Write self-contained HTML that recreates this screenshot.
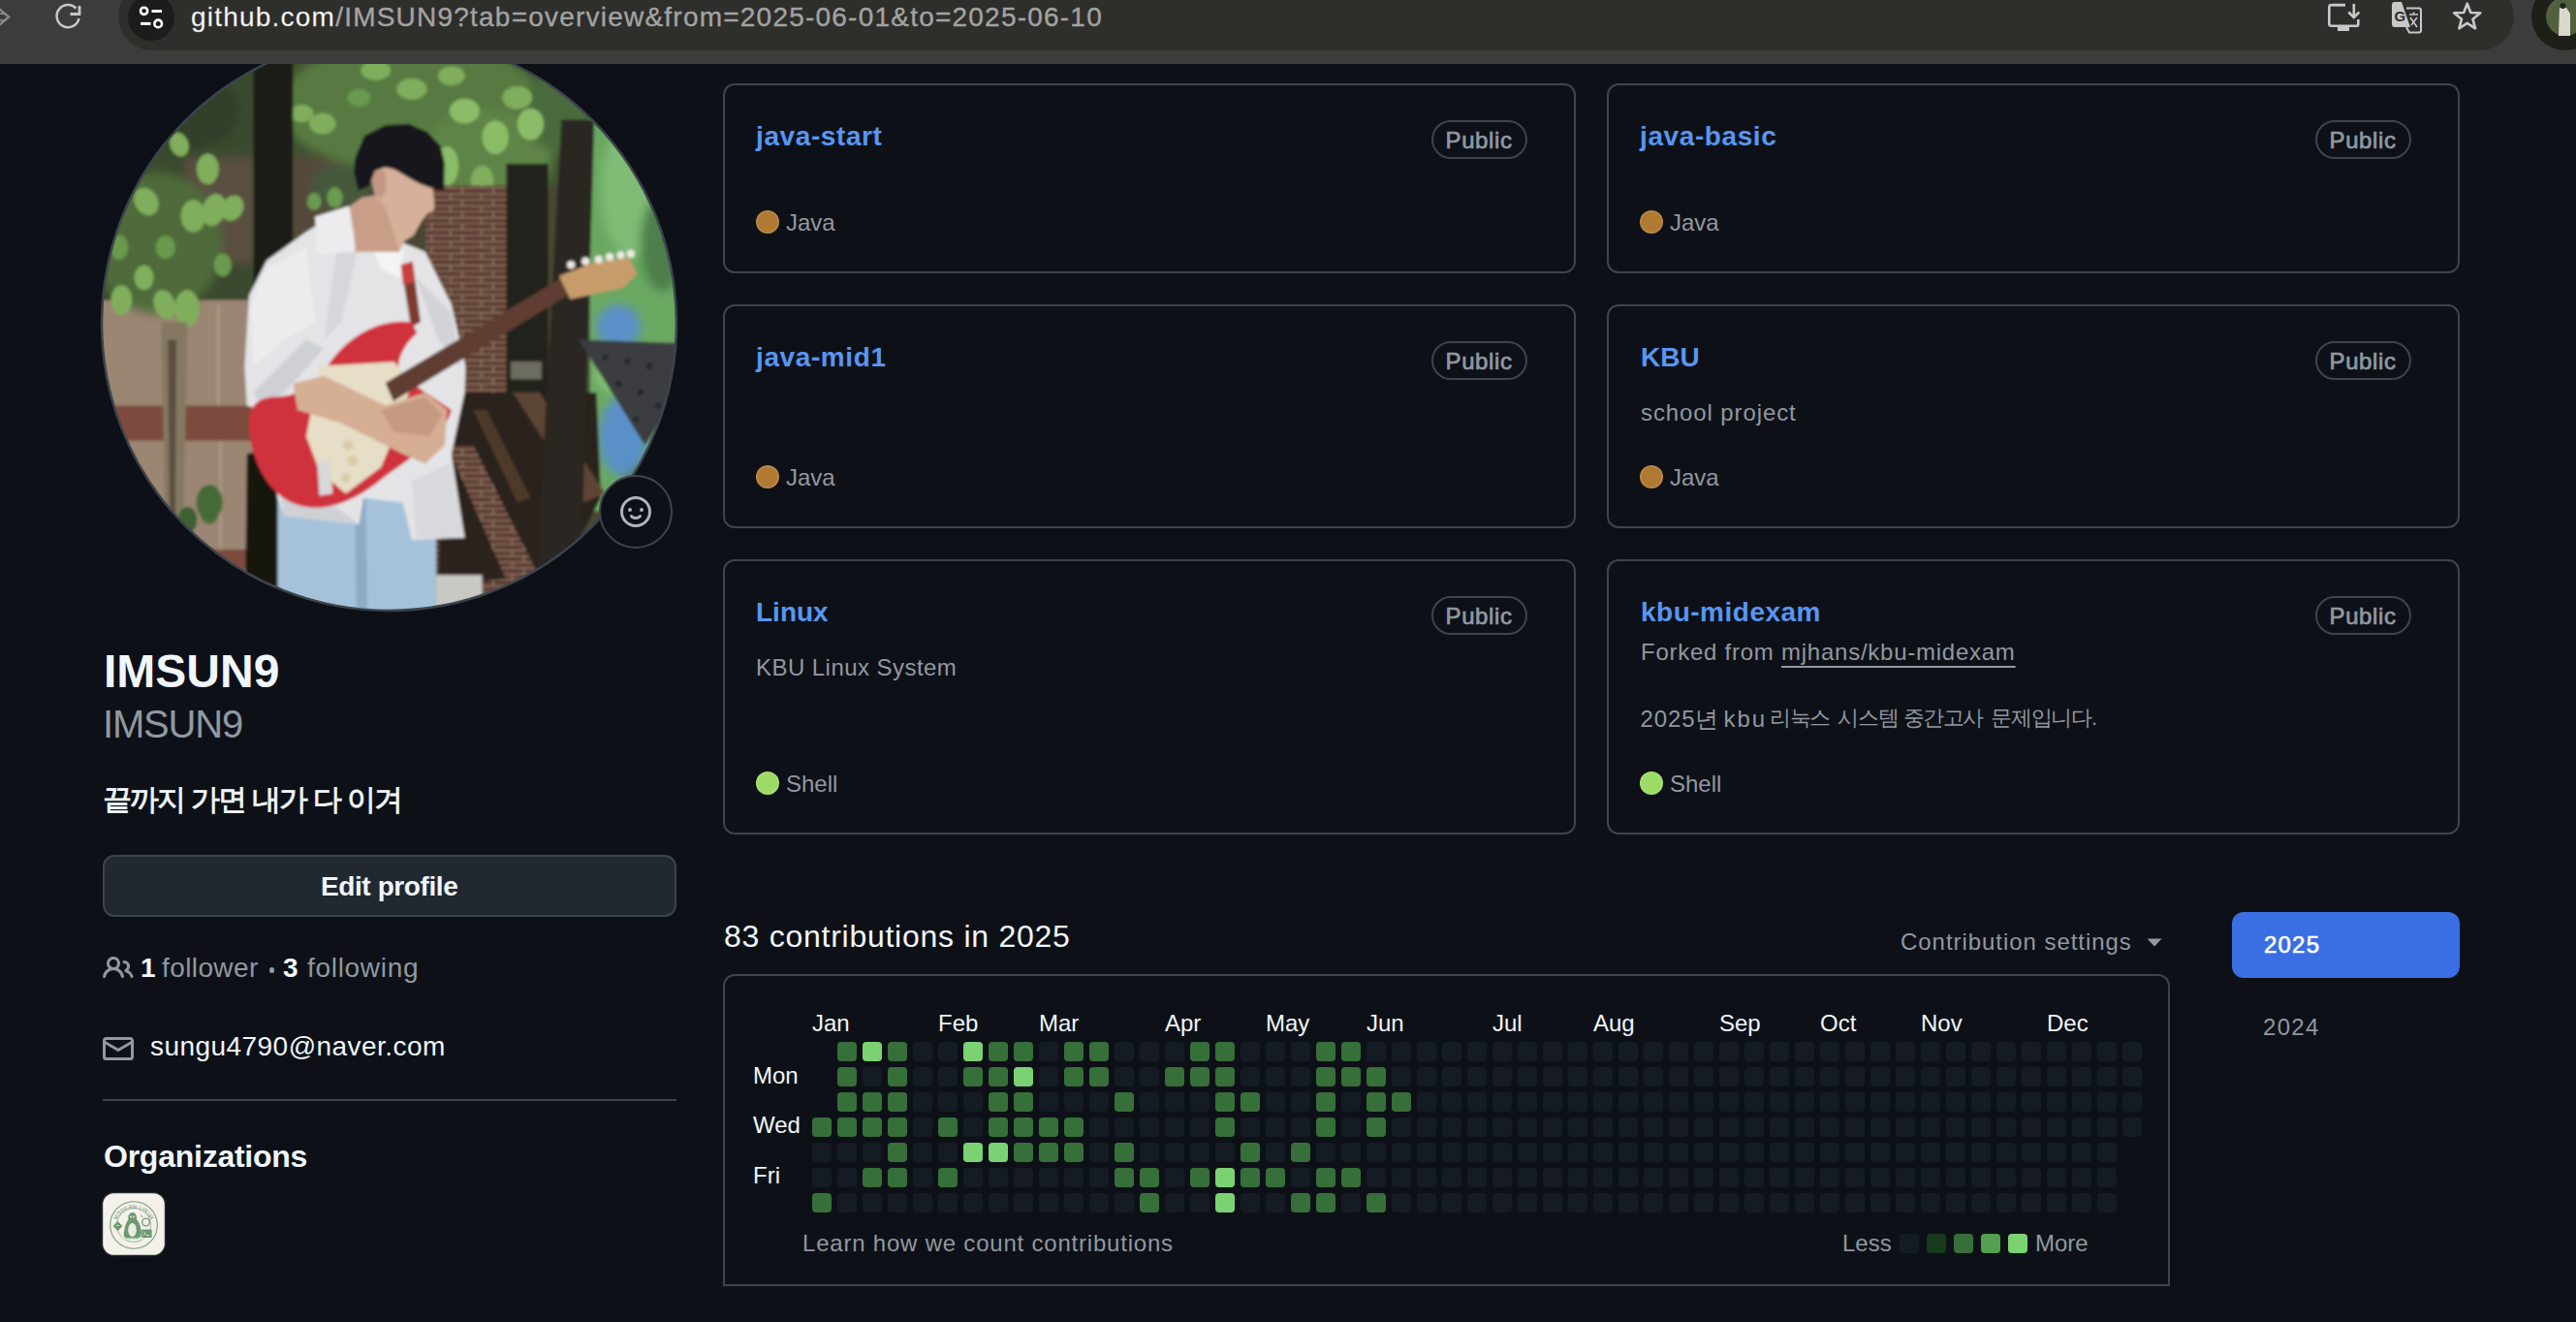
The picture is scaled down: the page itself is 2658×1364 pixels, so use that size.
<!DOCTYPE html>
<html><head><meta charset="utf-8"><title>IMSUN9</title>
<style>
html,body{margin:0;padding:0;}
body{width:2658px;height:1364px;overflow:hidden;background:#0d1117;position:relative;font-family:"Liberation Sans", sans-serif;}
.t{position:absolute;white-space:nowrap;font-family:"Liberation Sans", sans-serif;}
svg{display:block}
</style></head><body>
<svg style="position:absolute;left:0;top:0" width="720" height="650" viewBox="0 0 720 650">
<defs>
<clipPath id="avc"><circle cx="401.5" cy="333.5" r="296"/></clipPath>
<filter id="gbl" x="0" y="0" width="100%" height="100%"><feGaussianBlur stdDeviation="1.6"/></filter>
<filter id="sbl" x="-20%" y="-20%" width="140%" height="140%"><feGaussianBlur stdDeviation="10"/></filter>
<pattern id="brick" width="70" height="27" patternUnits="userSpaceOnUse">
<rect width="70" height="27" fill="#583629"/>
<path d="M0 25.5 H70 M0 12 H70 M35 0 V12 M8 12 V25.5" stroke="#8c7666" stroke-width="4"/>
</pattern>
</defs>
<g clip-path="url(#avc)">
<g filter="url(#gbl)">
<g transform="translate(80 60) scale(0.45384)">
<rect x="-10" y="-10" width="1440" height="1340" fill="#474733"/>
<!-- left beige wall -->
<rect x="0" y="540" width="410" height="800" fill="#9a8672"/>
<rect x="0" y="790" width="410" height="80" fill="#7b4b3d"/>
<rect x="0" y="1117" width="410" height="46" fill="#7b4b3d"/>
<path d="M320 560 V790 M325 870 V1117" stroke="#b4a08c" stroke-width="4"/>
<!-- wall behind top foliage -->
<rect x="480" y="200" width="170" height="140" fill="#6e5c4a"/>
<!-- foliage base -->
<rect x="0" y="-10" width="400" height="560" fill="#3a4a2e"/>
<rect x="490" y="-10" width="700" height="300" fill="#3f5230"/>
<g filter="url(#sbl)"><rect x="244" y="224" width="160" height="243" fill="#5a5040"/>
<rect x="478" y="224" width="150" height="200" fill="#54483a"/></g>
<g filter="url(#sbl)">
<ellipse cx="180" cy="420" rx="150" ry="160" fill="#4f6a3a"/>
<ellipse cx="760" cy="110" rx="300" ry="150" fill="#587a42"/>
<ellipse cx="930" cy="230" rx="150" ry="110" fill="#5f8446"/>
<ellipse cx="1120" cy="120" rx="110" ry="100" fill="#4a6a3c"/>
<ellipse cx="250" cy="120" rx="120" ry="90" fill="#33402a"/>
<ellipse cx="600" cy="290" rx="70" ry="50" fill="#44583a"/>
</g>
<g fill="#80ae5c">
<ellipse cx="296" cy="252" rx="25" ry="35"/>
<ellipse cx="156" cy="326" rx="26" ry="33" transform="rotate(-30 156 326)"/>
<ellipse cx="263" cy="359" rx="28" ry="37"/>
<ellipse cx="310" cy="345" rx="26" ry="37" transform="rotate(15 310 345)"/>
<ellipse cx="352" cy="341" rx="24" ry="30" transform="rotate(30 352 341)"/>
<ellipse cx="231" cy="196" rx="21" ry="28" transform="rotate(-20 231 196)"/>
<ellipse cx="100" cy="550" rx="24" ry="34"/>
<ellipse cx="249" cy="569" rx="28" ry="42"/>
<ellipse cx="198" cy="560" rx="24" ry="34" transform="rotate(-20 198 560)"/>
<ellipse cx="151" cy="499" rx="22" ry="28"/>
<ellipse cx="95" cy="430" rx="20" ry="28" fill="#6a9a4e"/>
<ellipse cx="200" cy="430" rx="22" ry="26" fill="#6a9a4e"/>
<ellipse cx="330" cy="470" rx="20" ry="26" fill="#6a9a4e"/>
<ellipse cx="557" cy="149" rx="30" ry="24"/>
<ellipse cx="510" cy="126" rx="26" ry="20"/>
<ellipse cx="585" cy="317" rx="18" ry="24" fill="#6a9a4e"/>
<ellipse cx="538" cy="326" rx="16" ry="20" fill="#6a9a4e"/>
<ellipse cx="678" cy="28" rx="34" ry="22"/>
<ellipse cx="760" cy="70" rx="34" ry="24"/>
<ellipse cx="850" cy="40" rx="30" ry="22"/>
<ellipse cx="880" cy="120" rx="34" ry="28" fill="#8cbc68"/>
<ellipse cx="950" cy="180" rx="30" ry="38" fill="#8cbc68"/>
<ellipse cx="1030" cy="150" rx="30" ry="36" fill="#8cbc68"/>
<ellipse cx="840" cy="245" rx="26" ry="44" fill="#8cbc68"/>
<ellipse cx="920" cy="280" rx="26" ry="36"/>
<ellipse cx="1000" cy="90" rx="34" ry="26"/>
<ellipse cx="640" cy="90" rx="26" ry="20" fill="#6a9a4e"/>
<ellipse cx="1080" cy="40" rx="26" ry="20"/>
<ellipse cx="990" cy="380" rx="18" ry="28" fill="#6a9a4e"/>
<ellipse cx="830" cy="400" rx="16" ry="24" fill="#6a9a4e"/>
<ellipse cx="90" cy="1120" rx="22" ry="34" fill="#5f8a48"/>
<ellipse cx="200" cy="1150" rx="26" ry="40" fill="#5f8a48"/>
<ellipse cx="300" cy="1030" rx="22" ry="30" fill="#4d7238"/>
</g>
<!-- left thin tree -->
<path d="M190 600 L250 600 L240 1100 L200 1100 Z" fill="#857864"/>
<path d="M205 640 L225 640 L222 1080 L210 1080 Z" fill="#5c5040"/>
<ellipse cx="300" cy="1010" rx="30" ry="40" fill="#456a38"/><ellipse cx="250" cy="1050" rx="22" ry="30" fill="#3e5e32"/>
<!-- dark trunk -->
<rect x="400" y="-10" width="90" height="1340" fill="#1b1b16"/>
<path d="M385 900 L470 880 L475 1330 L380 1330 Z" fill="#151410"/>
<!-- brick wall -->
<rect x="790" y="290" width="200" height="1040" fill="url(#brick)"/>
<!-- doorway -->
<rect x="975" y="240" width="95" height="540" fill="#20221c"/>
<rect x="985" y="690" width="70" height="40" fill="#6c6c60"/>
<!-- mural -->
<rect x="1165" y="130" width="260" height="900" fill="#6aa862"/>
<g filter="url(#sbl)">
<ellipse cx="1260" cy="300" rx="70" ry="150" fill="#80bc74"/>
<ellipse cx="1330" cy="420" rx="50" ry="110" fill="#4e7e4c"/>
<ellipse cx="1230" cy="610" rx="50" ry="50" fill="#5a90c8"/>
<ellipse cx="1240" cy="860" rx="55" ry="90" fill="#5a90c8"/>
<ellipse cx="1300" cy="980" rx="60" ry="60" fill="#4c7e48"/>
<ellipse cx="1220" cy="720" rx="40" ry="40" fill="#8cc478"/>
</g>
<!-- stairs/railing -->
<path d="M830 760 L1180 760 L1190 1000 L1100 1170 L820 1200 Z" fill="#2a211a"/>
<path d="M990 760 L1050 760 L1200 990 L1150 1010 Z" fill="#5c4434"/>
<path d="M840 880 L900 880 L1060 1200 L990 1220 Z" fill="url(#brick)"/>
<path d="M900 800 L930 800 L1030 1000 L1000 1010 Z" fill="#4e3a2c"/>
<!-- right trunk -->
<path d="M1100 140 L1175 140 L1145 1163 L1045 1163 Z" fill="#2c2822"/>
<!-- music stand -->
<path d="M1140 640 L1370 648 L1370 760 L1290 880 Z" fill="#3a3d40"/>
<g fill="#22252a"><circle cx="1200" cy="680" r="7"/><circle cx="1250" cy="690" r="7"/><circle cx="1300" cy="700" r="7"/><circle cx="1230" cy="740" r="7"/><circle cx="1280" cy="760" r="7"/><circle cx="1320" cy="790" r="7"/><circle cx="1270" cy="820" r="6"/></g>
<!-- white box -->
<rect x="815" y="1175" width="105" height="80" fill="#c8c8c4"/>
<!-- jeans -->
<path d="M455 950 L815 960 L815 1330 L455 1330 Z" fill="#a6c2da"/>
<path d="M630 1000 L655 1000 L660 1330 L635 1330 Z" fill="#8eaac4"/>
<!-- shirt -->
<path d="M600 345 L520 395 L430 460 L390 540 L380 700 L385 790 L420 800 L455 1000 L470 1040 L640 1060 L650 1000 L740 1010 L760 1095 L880 1090 L850 900 L880 760 L882 700 L850 560 L790 440 L740 420 L720 440 L700 380 L650 340 Z" fill="#e4e4e7"/>
<path d="M430 480 L520 430 L540 600 L470 640 L400 700 L395 560 Z" fill="#ececee"/>
<path d="M520 640 L560 660 L470 760 L420 790 L400 760 Z" fill="#cfd0d4"/>
<path d="M770 500 L850 580 L870 700 L820 640 Z" fill="#d2d3d7"/>
<path d="M660 400 L740 430 L735 500 L690 480 Z" fill="#f4f4f4"/>
<path d="M600 360 L640 420 L600 600 L560 640 Z" fill="#d6d7db"/>
<path d="M455 960 L560 1000 L640 1060 L470 1040 Z" fill="#d0d1d5"/>
<path d="M760 960 L850 920 L880 1090 L770 1090 Z" fill="#d8d9dd"/>
<!-- strap -->
<path d="M735 470 L762 462 L780 600 L758 612 Z" fill="#7c3a2e"/>
<path d="M735 470 L762 462 L765 510 L740 515 Z" fill="#c8403a"/>
<!-- guitar body -->
<path d="M560 715 C600 640 680 590 760 600 L772 625 C742 650 722 690 732 720 L850 800 C840 850 760 910 700 950 C640 1000 580 1030 520 1020 C440 1010 395 920 390 840 C388 790 410 770 450 770 C500 770 540 740 560 715 Z" fill="#cf333d"/>
<path d="M550 700 L720 690 L760 740 L720 860 L690 930 L610 990 L550 940 L520 860 Z" fill="#e6dec6"/>
<g fill="#d8cca8"><circle cx="615" cy="880" r="12"/><circle cx="625" cy="915" r="12"/><circle cx="610" cy="955" r="11"/></g>
<path d="M545 920 L575 915 L580 990 L550 995 Z" fill="#d8d8d8"/>
<!-- neck -->
<path d="M700 738 L1100 500 L1116 538 L718 780 Z" fill="#5e3e32"/>
<path d="M1095 495 L1180 462 L1255 455 L1272 490 L1240 522 L1120 548 Z" fill="#c89c6a"/>
<g fill="#eeeae2"><circle cx="1122" cy="470" r="9"/><circle cx="1155" cy="462" r="9"/><circle cx="1185" cy="458" r="9"/><circle cx="1210" cy="452" r="9"/><circle cx="1235" cy="448" r="9"/><circle cx="1258" cy="445" r="9"/></g>
<!-- arms / hands -->
<path d="M490 740 L560 722 L700 790 L790 760 L840 800 L835 880 L790 922 L740 900 L680 870 L600 830 L500 800 Z" fill="#d6ae94"/>
<path d="M690 800 L790 770 L830 810 L800 860 L720 850 Z" fill="#c49a80"/>
<!-- hair + face -->
<path d="M617.5 338.7 L646.8 317.4 L676.1 312.1 L668.1 274.8 L675 235 L710 225 L750 245 L790 270 L806.8 290 L810.8 322.7 L810.8 344.1 L793.4 354.7 L780.1 373.4 L764.1 402.7 L742.8 416 L732.1 440 L630.8 440 L617.5 381.4 Z" fill="#d6b09a"/>
<path d="M617.5 338.7 L646.8 317.4 L676.1 312.1 L700 340 L720 400 L732 440 L630.8 440 L617.5 381.4 Z" fill="#c89e88"/>
<path d="M668.1 274.8 L678.8 253.4 L700 258 L702 300 L690 318 L676 312 Z" fill="#c49684"/>
<path d="M630.8 226.8 L652.2 176.1 L700.1 152.1 L753.5 149.5 L796.1 168.1 L825.4 200.1 L834.8 237.4 L833.4 301.4 L806.8 296.1 L777.4 285.4 L753.5 272.1 L721.5 253.4 L700.1 248.1 L676.1 256.1 L662.8 290.8 L638.8 301.4 L628.2 261.4 Z" fill="#17181b"/>
<path d="M540 360 L617.5 336 L628 400 L632 440 L545 445 Z" fill="#ececee"/>
</g>
</g>
</g>
<circle cx="401.5" cy="333.5" r="296.5" fill="none" stroke="#3d444d" stroke-width="2.5"/>
</svg>
<div style="position:absolute;left:0px;top:0px;width:2658px;height:66px;background:#3c3c3c"></div><div style="position:absolute;left:122px;top:-18px;width:2472px;height:70px;background:#2e2e2b;border-radius:35px"></div><div style="position:absolute;left:132px;top:-6px;width:48px;height:48px;background:#1c1c1a;border-radius:50%"></div><svg style="position:absolute;left:0;top:0" width="240" height="66">
<g fill="none" stroke="#fff" stroke-width="2.6">
<circle cx="148.6" cy="11.3" r="3.6"/><circle cx="163.2" cy="24.4" r="3.8"/>
</g>
<g stroke="#fff" stroke-width="3"><line x1="156.5" y1="11.5" x2="167" y2="11.5"/><line x1="145" y1="24.4" x2="155.5" y2="24.4"/></g>
<path d="M 81.5 19 A 11.6 11.6 0 1 1 78.5 8.5" fill="none" stroke="#c6c6c6" stroke-width="2.6"/>
<path d="M 72.5 14.5 L 82 14.5 L 82 6" fill="none" stroke="#c6c6c6" stroke-width="2.8"/>
<path d="M -2 8 L 9 17.5 L -2 27" fill="none" stroke="#8a8a8a" stroke-width="2.4"/>
<path d="M -2 14.2 L 6 14.2 M -2 20.8 L 6 20.8" stroke="#8a8a8a" stroke-width="1.8"/>
</svg><div class="t" style="left:197px;top:4.0px;font-size:28px;line-height:28px;color:#a3a3a3;font-weight:400;letter-spacing:1.22px;-webkit-text-stroke:0.35px #a3a3a3;"><span style="color:#ffffff">github.com</span>/IMSUN9?tab=overview&amp;from=2025-06-01&amp;to=2025-06-10</div><svg style="position:absolute;left:2380;top:0;left:2380px" width="278" height="66">
<g fill="none" stroke="#c6c6c6" stroke-width="2.6">
<path d="M 23 5 L 24 5 L 24 5 M 40 5 L 26 5 L 26 5"/>
</g>
</svg><svg style="position:absolute;left:2390px;top:0" width="268" height="66">
<g fill="none" stroke="#c8c8c8" stroke-width="2.6">
<path d="M 30 5.3 L 15.5 5.3 Q 13.3 5.3 13.3 7.5 L 13.3 24.5 Q 13.3 26.7 15.5 26.7 L 41.5 26.7 Q 43.3 26.7 43.3 24.9 L 43.3 20"/>
<path d="M 38.8 4 L 38.8 18 M 33.3 12.5 L 38.8 18 L 44.3 12.5"/>
</g>
<rect x="22" y="27" width="12" height="5" fill="#c8c8c8"/>
<path d="M 78.5 2 L 88 2 L 97 28 L 81 28 Q 78 28 78 25 L 78 5 Q 78 2 81 2 Z" fill="#c8c8c8"/>
<path d="M 93 8.5 L 106 8.5 Q 108 8.5 108 10.5 L 108 31.5 Q 108 33.5 106 33.5 L 96 33.5 L 93 28" fill="none" stroke="#c8c8c8" stroke-width="2"/>
<text x="80.5" y="21.5" font-family="Liberation Sans" font-weight="bold" font-size="15" fill="#2e2e2b">G</text>
<path d="M 96 15 L 105 15 M 100.5 12.5 L 100.5 15 M 97 18 L 104 28 M 104 18 L 98 26" stroke="#c8c8c8" stroke-width="1.6" fill="none"/>
<path d="M 155.75 3.60 L 159.28 12.95 L 169.26 13.41 L 161.46 19.65 L 164.10 29.29 L 155.75 23.80 L 147.40 29.29 L 150.04 19.65 L 142.24 13.41 L 152.22 12.95 Z" fill="none" stroke="#c8c8c8" stroke-width="2.6" stroke-linejoin="round"/>
<circle cx="257" cy="17" r="35" fill="#1f1f1a"/>
<circle cx="257" cy="17" r="20" fill="#52603e"/>
<path d="M 251 8 L 258 8 L 262 14 L 262 37 L 250 37 Z" fill="#d9d8cf"/><circle cx="254.5" cy="6" r="3" fill="#222"/>
</svg><div style="position:absolute;left:618px;top:490px;width:76px;height:76px;box-sizing:border-box;background:#0d1117;border:2px solid #3d444d;border-radius:50%"></div><svg style="position:absolute;left:640px;top:512px" width="32" height="32" viewBox="0 0 16 16"><path d="M8 0a8 8 0 1 1 0 16A8 8 0 0 1 8 0ZM1.5 8a6.5 6.5 0 1 0 13 0 6.5 6.5 0 0 0-13 0Zm3.82 1.636a.75.75 0 0 1 1.038.175l.007.009c.103.118.22.222.35.31.264.178.683.37 1.285.37.602 0 1.02-.192 1.285-.371.13-.088.247-.192.35-.31l.007-.008a.75.75 0 0 1 1.222.87l-.022-.015c.02.013.021.015.021.015v.001l-.001.002-.002.003-.005.007-.014.019a2.066 2.066 0 0 1-.184.213c-.16.166-.338.316-.53.445-.63.418-1.37.638-2.127.629-.946 0-1.652-.308-2.126-.63a3.331 3.331 0 0 1-.715-.657l-.014-.02-.005-.006-.002-.003v-.002h-.001l.613-.432-.614.43a.75.75 0 0 1 .183-1.044ZM12 7a1 1 0 1 1-2 0 1 1 0 0 1 2 0ZM5 8a1 1 0 1 1 0-2 1 1 0 0 1 0 2Zm5.25 2.25.592.416a97.71 97.71 0 0 0-.592-.416Z" fill="#aeb4bb"/></svg><div class="t" style="left:107px;top:669.4px;font-size:48px;line-height:48px;color:#f0f6fc;font-weight:700;letter-spacing:0px;">IMSUN9</div><div class="t" style="left:106px;top:727.0px;font-size:40px;line-height:40px;color:#9198a1;font-weight:400;letter-spacing:-1.2px;">IMSUN9</div><div class="t" style="left:106px;top:810.0px;font-size:30px;line-height:30px;color:#f0f6fc;font-weight:400;letter-spacing:-1.8px;-webkit-text-stroke:0.9px #f0f6fc;">끝까지 가면 내가 다 이겨</div><div style="position:absolute;left:106px;top:882px;width:592px;height:64px;box-sizing:border-box;background:#212830;border:2px solid #3d444d;border-radius:12px"></div><div class="t" style="left:331px;top:900.8px;font-size:28px;line-height:28px;color:#f0f6fc;font-weight:700;letter-spacing:-0.4px;">Edit profile</div><svg style="position:absolute;left:105.5px;top:982.6px" width="32" height="32" viewBox="0 0 16 16"><path d="M2 5.5a3.5 3.5 0 1 1 5.898 2.549 5.508 5.508 0 0 1 3.034 4.084.75.75 0 1 1-1.482.235 4 4 0 0 0-7.9 0 .75.75 0 0 1-1.482-.236A5.507 5.507 0 0 1 3.102 8.05 3.493 3.493 0 0 1 2 5.5ZM11 4a3.001 3.001 0 0 1 2.22 5.018 5.01 5.01 0 0 1 2.56 3.012.749.749 0 0 1-.885.954.752.752 0 0 1-.549-.514 3.507 3.507 0 0 0-2.522-2.372.75.75 0 0 1-.574-.73v-.352a.75.75 0 0 1 .416-.672A1.5 1.5 0 0 0 11 5.5.75.75 0 0 1 11 4Zm-5.5-.5a2 2 0 1 0-.001 3.999A2 2 0 0 0 5.5 3.5Z" fill="#9198a1"/></svg><svg style="position:absolute;left:106px;top:1066px" width="32" height="32" viewBox="0 0 16 16"><path d="M1.75 2h12.5c.966 0 1.75.784 1.75 1.75v8.5A1.75 1.75 0 0 1 14.25 14H1.75A1.75 1.75 0 0 1 0 12.25v-8.5C0 2.784.784 2 1.75 2ZM1.5 12.251c0 .138.112.25.25.25h12.5a.25.25 0 0 0 .25-.25V5.809L8.38 9.397a.75.75 0 0 1-.76 0L1.5 5.809v6.442Zm13-8.181v-.32a.25.25 0 0 0-.25-.25H1.75a.25.25 0 0 0-.25.25v.32L8 7.88Z" fill="#9198a1"/></svg><div class="t" style="left:145px;top:985.2px;font-size:28px;line-height:28px;color:#f0f6fc;font-weight:700;letter-spacing:0px;">1</div><div class="t" style="left:167px;top:985.2px;font-size:28px;line-height:28px;color:#9198a1;font-weight:400;letter-spacing:0.4px;">follower</div><div style="position:absolute;left:277.5px;top:998px;width:5.5px;height:5.5px;background:#9198a1;border-radius:50%"></div><div class="t" style="left:292px;top:985.2px;font-size:28px;line-height:28px;color:#f0f6fc;font-weight:700;letter-spacing:0px;">3</div><div class="t" style="left:317px;top:985.2px;font-size:28px;line-height:28px;color:#9198a1;font-weight:400;letter-spacing:0.7px;">following</div><div class="t" style="left:155px;top:1066.4px;font-size:28px;line-height:28px;color:#f0f6fc;font-weight:400;letter-spacing:0.45px;">sungu4790@naver.com</div><div style="position:absolute;left:106px;top:1134px;width:592px;height:2px;background:#3d444d"></div><div class="t" style="left:107px;top:1177.0px;font-size:32px;line-height:32px;color:#f0f6fc;font-weight:700;letter-spacing:-0.25px;">Organizations</div><svg style="position:absolute;left:104px;top:1229px" width="68" height="68" viewBox="0 0 68 68">
<defs><path id="arcp" d="M 15 37 A 19 19 0 0 1 53 37"/></defs>
<rect x="0.8" y="0.8" width="66.4" height="66.4" rx="13" fill="#262c33"/>
<rect x="2.2" y="2.2" width="63.6" height="63.6" rx="11.5" fill="#f3f1ea"/>
<circle cx="34" cy="35" r="24.3" fill="none" stroke="#7a9d7b" stroke-width="1.1"/>
<circle cx="34" cy="35" r="17.5" fill="none" stroke="#8fb090" stroke-width="0.9"/>
<text font-family="Liberation Sans" font-size="5.4" fill="#5f8a60" letter-spacing="0.3"><textPath href="#arcp" startOffset="50%" text-anchor="middle">MODERN LINUX</textPath></text>
<ellipse cx="34" cy="47.5" rx="14" ry="3.2" fill="#dce8d8"/>
<path d="M 29 24 Q 32 20.5 35.5 23 Q 37 25 37 29 Q 41 34 42 42 Q 42 48 38 48.5 L 27 48.5 Q 23 48 24 42 Q 25 34 28.5 29 Q 28 26 29 24 Z" fill="#6f9870"/>
<ellipse cx="32.5" cy="40" rx="4.3" ry="7" fill="#e6efe2"/>
<circle cx="31" cy="26.5" r="0.9" fill="#f3f1ea"/><circle cx="34" cy="26.5" r="0.9" fill="#f3f1ea"/>
<circle cx="46.5" cy="32" r="3.8" fill="none" stroke="#6f9870" stroke-width="1.3"/>
<path d="M 43 27 L 41.5 24.5 M 50 27 L 51.5 24.5" stroke="#6f9870" stroke-width="1"/>
<rect x="42.3" y="39.5" width="10.3" height="8.5" fill="#6f9870"/>
<path d="M 44.2 42 L 46.2 43.8 L 44.2 45.6 M 47 45.6 L 50 45.6" stroke="#e6efe2" stroke-width="0.9" fill="none"/>
<rect x="14" y="32.5" width="7" height="7" fill="#6f9870" transform="rotate(45 17.5 36)"/>
<path d="M 16 35.5 L 19 35.5" stroke="#e6efe2" stroke-width="0.8"/>
</svg>
<div style="position:absolute;left:746px;top:86px;width:880px;height:196px;box-sizing:border-box;border:2px solid #3d444d;border-radius:12px"></div><div style="position:absolute;left:1477px;top:124px;width:99px;height:40px;box-sizing:border-box;border:2px solid #3d444d;border-radius:20px"></div><div class="t" style="left:1491.5px;top:132.6px;font-size:24px;line-height:24px;color:#9198a1;font-weight:400;letter-spacing:0.62px;-webkit-text-stroke:0.7px #9198a1;">Public</div><div style="position:absolute;left:1658px;top:86px;width:880px;height:196px;box-sizing:border-box;border:2px solid #3d444d;border-radius:12px"></div><div style="position:absolute;left:2389px;top:124px;width:99px;height:40px;box-sizing:border-box;border:2px solid #3d444d;border-radius:20px"></div><div class="t" style="left:2403.5px;top:132.6px;font-size:24px;line-height:24px;color:#9198a1;font-weight:400;letter-spacing:0.62px;-webkit-text-stroke:0.7px #9198a1;">Public</div><div style="position:absolute;left:746px;top:314px;width:880px;height:231px;box-sizing:border-box;border:2px solid #3d444d;border-radius:12px"></div><div style="position:absolute;left:1477px;top:352px;width:99px;height:40px;box-sizing:border-box;border:2px solid #3d444d;border-radius:20px"></div><div class="t" style="left:1491.5px;top:360.6px;font-size:24px;line-height:24px;color:#9198a1;font-weight:400;letter-spacing:0.62px;-webkit-text-stroke:0.7px #9198a1;">Public</div><div style="position:absolute;left:1658px;top:314px;width:880px;height:231px;box-sizing:border-box;border:2px solid #3d444d;border-radius:12px"></div><div style="position:absolute;left:2389px;top:352px;width:99px;height:40px;box-sizing:border-box;border:2px solid #3d444d;border-radius:20px"></div><div class="t" style="left:2403.5px;top:360.6px;font-size:24px;line-height:24px;color:#9198a1;font-weight:400;letter-spacing:0.62px;-webkit-text-stroke:0.7px #9198a1;">Public</div><div style="position:absolute;left:746px;top:577px;width:880px;height:284px;box-sizing:border-box;border:2px solid #3d444d;border-radius:12px"></div><div style="position:absolute;left:1477px;top:615px;width:99px;height:40px;box-sizing:border-box;border:2px solid #3d444d;border-radius:20px"></div><div class="t" style="left:1491.5px;top:623.6px;font-size:24px;line-height:24px;color:#9198a1;font-weight:400;letter-spacing:0.62px;-webkit-text-stroke:0.7px #9198a1;">Public</div><div style="position:absolute;left:1658px;top:577px;width:880px;height:284px;box-sizing:border-box;border:2px solid #3d444d;border-radius:12px"></div><div style="position:absolute;left:2389px;top:615px;width:99px;height:40px;box-sizing:border-box;border:2px solid #3d444d;border-radius:20px"></div><div class="t" style="left:2403.5px;top:623.6px;font-size:24px;line-height:24px;color:#9198a1;font-weight:400;letter-spacing:0.62px;-webkit-text-stroke:0.7px #9198a1;">Public</div><div class="t" style="left:780px;top:127.2px;font-size:28px;line-height:28px;color:#5896f2;font-weight:700;letter-spacing:0.6px;">java-start</div><div style="position:absolute;left:780px;top:217px;width:24px;height:24px;background:#b07a33;border-radius:50%;box-shadow:inset 0 0 0 1.5px rgba(255,255,255,0.12)"></div><div class="t" style="left:811px;top:218.3px;font-size:24px;line-height:24px;color:#9198a1;font-weight:400;letter-spacing:0px;">Java</div><div class="t" style="left:1692px;top:127.2px;font-size:28px;line-height:28px;color:#5896f2;font-weight:700;letter-spacing:0.6px;">java-basic</div><div style="position:absolute;left:1692px;top:217px;width:24px;height:24px;background:#b07a33;border-radius:50%;box-shadow:inset 0 0 0 1.5px rgba(255,255,255,0.12)"></div><div class="t" style="left:1723px;top:218.3px;font-size:24px;line-height:24px;color:#9198a1;font-weight:400;letter-spacing:0px;">Java</div><div class="t" style="left:780px;top:355.2px;font-size:28px;line-height:28px;color:#5896f2;font-weight:700;letter-spacing:0.6px;">java-mid1</div><div style="position:absolute;left:780px;top:480px;width:24px;height:24px;background:#b07a33;border-radius:50%;box-shadow:inset 0 0 0 1.5px rgba(255,255,255,0.12)"></div><div class="t" style="left:811px;top:481.3px;font-size:24px;line-height:24px;color:#9198a1;font-weight:400;letter-spacing:0px;">Java</div><div class="t" style="left:1693px;top:355.2px;font-size:28px;line-height:28px;color:#5896f2;font-weight:700;letter-spacing:0px;">KBU</div><div class="t" style="left:1693px;top:413.6px;font-size:24px;line-height:24px;color:#9198a1;font-weight:400;letter-spacing:0.9px;">school project</div><div style="position:absolute;left:1692px;top:480px;width:24px;height:24px;background:#b07a33;border-radius:50%;box-shadow:inset 0 0 0 1.5px rgba(255,255,255,0.12)"></div><div class="t" style="left:1723px;top:481.3px;font-size:24px;line-height:24px;color:#9198a1;font-weight:400;letter-spacing:0px;">Java</div><div class="t" style="left:780px;top:617.7px;font-size:28px;line-height:28px;color:#5896f2;font-weight:700;letter-spacing:0px;">Linux</div><div class="t" style="left:780px;top:677.4px;font-size:24px;line-height:24px;color:#9198a1;font-weight:400;letter-spacing:0.45px;">KBU Linux System</div><div style="position:absolute;left:780px;top:796px;width:24px;height:24px;background:#9cdc66;border-radius:50%;box-shadow:inset 0 0 0 1.5px rgba(255,255,255,0.12)"></div><div class="t" style="left:811px;top:797.3px;font-size:24px;line-height:24px;color:#9198a1;font-weight:400;letter-spacing:0px;">Shell</div><div class="t" style="left:1693px;top:617.6px;font-size:28px;line-height:28px;color:#5896f2;font-weight:700;letter-spacing:0.5px;">kbu-midexam</div><div class="t" style="left:1693px;top:661.4px;font-size:24px;line-height:24px;color:#9198a1;font-weight:400;letter-spacing:0.75px;">Forked from <span style="text-decoration:underline;text-underline-offset:6px;text-decoration-thickness:2px">mjhans/kbu-midexam</span></div><div class="t" style="left:1692.5px;top:730.0px;font-size:24px;line-height:24px;color:#9198a1;font-weight:400;letter-spacing:0.875px;">2025년</div><div class="t" style="left:1778.5px;top:730.0px;font-size:24px;line-height:24px;color:#9198a1;font-weight:400;letter-spacing:1.9px;">kbu</div><div class="t" style="left:1825.7px;top:730.3px;font-size:22px;line-height:22px;color:#9198a1;font-weight:400;letter-spacing:-1.1px;">리눅스</div><div class="t" style="left:1896px;top:730.3px;font-size:22px;line-height:22px;color:#9198a1;font-weight:400;letter-spacing:-1.2px;">시스템</div><div class="t" style="left:1964px;top:730.3px;font-size:22px;line-height:22px;color:#9198a1;font-weight:400;letter-spacing:-1.73px;">중간고사</div><div class="t" style="left:2054px;top:730.3px;font-size:22px;line-height:22px;color:#9198a1;font-weight:400;letter-spacing:-1.2px;">문제입니다.</div><div style="position:absolute;left:1692px;top:796px;width:24px;height:24px;background:#9cdc66;border-radius:50%;box-shadow:inset 0 0 0 1.5px rgba(255,255,255,0.12)"></div><div class="t" style="left:1723px;top:797.3px;font-size:24px;line-height:24px;color:#9198a1;font-weight:400;letter-spacing:0px;">Shell</div><div class="t" style="left:747px;top:950.1px;font-size:32px;line-height:32px;color:#f0f6fc;font-weight:400;letter-spacing:0.74px;">83 contributions in 2025</div><div class="t" style="left:1961px;top:959.8px;font-size:24px;line-height:24px;color:#9198a1;font-weight:400;letter-spacing:0.95px;">Contribution settings</div><svg style="position:absolute;left:2212px;top:965px" width="24" height="16"><path d="M 3.5 3.5 L 18.5 3.5 L 11 11.5 Z" fill="#9198a1"/></svg><div style="position:absolute;left:2303px;top:941px;width:235px;height:68px;background:#3a6ee3;border-radius:12px"></div><div class="t" style="left:2336px;top:963.4px;font-size:24px;line-height:24px;color:#ffffff;font-weight:400;letter-spacing:1.2px;-webkit-text-stroke:0.6px #ffffff;">2025</div><div class="t" style="left:2335px;top:1047.6px;font-size:24px;line-height:24px;color:#9198a1;font-weight:400;letter-spacing:1.3px;">2024</div><div style="position:absolute;left:746px;top:1005px;width:1493px;height:322px;box-sizing:border-box;border:2px solid #3d444d;border-radius:12px 12px 0 0"></div><div class="t" style="left:838px;top:1043.6px;font-size:24px;line-height:24px;color:#f0f6fc;font-weight:400;letter-spacing:0px;">Jan</div><div class="t" style="left:968px;top:1043.6px;font-size:24px;line-height:24px;color:#f0f6fc;font-weight:400;letter-spacing:0px;">Feb</div><div class="t" style="left:1072px;top:1043.6px;font-size:24px;line-height:24px;color:#f0f6fc;font-weight:400;letter-spacing:0px;">Mar</div><div class="t" style="left:1202px;top:1043.6px;font-size:24px;line-height:24px;color:#f0f6fc;font-weight:400;letter-spacing:0px;">Apr</div><div class="t" style="left:1306px;top:1043.6px;font-size:24px;line-height:24px;color:#f0f6fc;font-weight:400;letter-spacing:0px;">May</div><div class="t" style="left:1410px;top:1043.6px;font-size:24px;line-height:24px;color:#f0f6fc;font-weight:400;letter-spacing:0px;">Jun</div><div class="t" style="left:1540px;top:1043.6px;font-size:24px;line-height:24px;color:#f0f6fc;font-weight:400;letter-spacing:0px;">Jul</div><div class="t" style="left:1644px;top:1043.6px;font-size:24px;line-height:24px;color:#f0f6fc;font-weight:400;letter-spacing:0px;">Aug</div><div class="t" style="left:1774px;top:1043.6px;font-size:24px;line-height:24px;color:#f0f6fc;font-weight:400;letter-spacing:0px;">Sep</div><div class="t" style="left:1878px;top:1043.6px;font-size:24px;line-height:24px;color:#f0f6fc;font-weight:400;letter-spacing:0px;">Oct</div><div class="t" style="left:1982px;top:1043.6px;font-size:24px;line-height:24px;color:#f0f6fc;font-weight:400;letter-spacing:0px;">Nov</div><div class="t" style="left:2112px;top:1043.6px;font-size:24px;line-height:24px;color:#f0f6fc;font-weight:400;letter-spacing:0px;">Dec</div><div class="t" style="left:777px;top:1097.6px;font-size:24px;line-height:24px;color:#f0f6fc;font-weight:400;letter-spacing:0px;">Mon</div><div class="t" style="left:777px;top:1149.4px;font-size:24px;line-height:24px;color:#f0f6fc;font-weight:400;letter-spacing:0px;">Wed</div><div class="t" style="left:777px;top:1201.1px;font-size:24px;line-height:24px;color:#f0f6fc;font-weight:400;letter-spacing:0px;">Fri</div><svg style="position:absolute;left:838px;top:1075px" width="1400" height="190"><rect x="0" y="78" width="20" height="20" rx="4" fill="#376f3a"/><rect x="0" y="104" width="20" height="20" rx="4" fill="#151b23"/><rect x="0" y="130" width="20" height="20" rx="4" fill="#151b23"/><rect x="0" y="156" width="20" height="20" rx="4" fill="#376f3a"/><rect x="26" y="0" width="20" height="20" rx="4" fill="#376f3a"/><rect x="26" y="26" width="20" height="20" rx="4" fill="#376f3a"/><rect x="26" y="52" width="20" height="20" rx="4" fill="#376f3a"/><rect x="26" y="78" width="20" height="20" rx="4" fill="#376f3a"/><rect x="26" y="104" width="20" height="20" rx="4" fill="#151b23"/><rect x="26" y="130" width="20" height="20" rx="4" fill="#151b23"/><rect x="26" y="156" width="20" height="20" rx="4" fill="#151b23"/><rect x="52" y="0" width="20" height="20" rx="4" fill="#7bd273"/><rect x="52" y="26" width="20" height="20" rx="4" fill="#151b23"/><rect x="52" y="52" width="20" height="20" rx="4" fill="#376f3a"/><rect x="52" y="78" width="20" height="20" rx="4" fill="#376f3a"/><rect x="52" y="104" width="20" height="20" rx="4" fill="#151b23"/><rect x="52" y="130" width="20" height="20" rx="4" fill="#376f3a"/><rect x="52" y="156" width="20" height="20" rx="4" fill="#151b23"/><rect x="78" y="0" width="20" height="20" rx="4" fill="#376f3a"/><rect x="78" y="26" width="20" height="20" rx="4" fill="#376f3a"/><rect x="78" y="52" width="20" height="20" rx="4" fill="#376f3a"/><rect x="78" y="78" width="20" height="20" rx="4" fill="#376f3a"/><rect x="78" y="104" width="20" height="20" rx="4" fill="#376f3a"/><rect x="78" y="130" width="20" height="20" rx="4" fill="#376f3a"/><rect x="78" y="156" width="20" height="20" rx="4" fill="#151b23"/><rect x="104" y="0" width="20" height="20" rx="4" fill="#151b23"/><rect x="104" y="26" width="20" height="20" rx="4" fill="#151b23"/><rect x="104" y="52" width="20" height="20" rx="4" fill="#151b23"/><rect x="104" y="78" width="20" height="20" rx="4" fill="#151b23"/><rect x="104" y="104" width="20" height="20" rx="4" fill="#151b23"/><rect x="104" y="130" width="20" height="20" rx="4" fill="#151b23"/><rect x="104" y="156" width="20" height="20" rx="4" fill="#151b23"/><rect x="130" y="0" width="20" height="20" rx="4" fill="#151b23"/><rect x="130" y="26" width="20" height="20" rx="4" fill="#151b23"/><rect x="130" y="52" width="20" height="20" rx="4" fill="#151b23"/><rect x="130" y="78" width="20" height="20" rx="4" fill="#376f3a"/><rect x="130" y="104" width="20" height="20" rx="4" fill="#151b23"/><rect x="130" y="130" width="20" height="20" rx="4" fill="#376f3a"/><rect x="130" y="156" width="20" height="20" rx="4" fill="#151b23"/><rect x="156" y="0" width="20" height="20" rx="4" fill="#7bd273"/><rect x="156" y="26" width="20" height="20" rx="4" fill="#376f3a"/><rect x="156" y="52" width="20" height="20" rx="4" fill="#151b23"/><rect x="156" y="78" width="20" height="20" rx="4" fill="#151b23"/><rect x="156" y="104" width="20" height="20" rx="4" fill="#7bd273"/><rect x="156" y="130" width="20" height="20" rx="4" fill="#151b23"/><rect x="156" y="156" width="20" height="20" rx="4" fill="#151b23"/><rect x="182" y="0" width="20" height="20" rx="4" fill="#376f3a"/><rect x="182" y="26" width="20" height="20" rx="4" fill="#376f3a"/><rect x="182" y="52" width="20" height="20" rx="4" fill="#376f3a"/><rect x="182" y="78" width="20" height="20" rx="4" fill="#376f3a"/><rect x="182" y="104" width="20" height="20" rx="4" fill="#7bd273"/><rect x="182" y="130" width="20" height="20" rx="4" fill="#151b23"/><rect x="182" y="156" width="20" height="20" rx="4" fill="#151b23"/><rect x="208" y="0" width="20" height="20" rx="4" fill="#376f3a"/><rect x="208" y="26" width="20" height="20" rx="4" fill="#7bd273"/><rect x="208" y="52" width="20" height="20" rx="4" fill="#376f3a"/><rect x="208" y="78" width="20" height="20" rx="4" fill="#376f3a"/><rect x="208" y="104" width="20" height="20" rx="4" fill="#376f3a"/><rect x="208" y="130" width="20" height="20" rx="4" fill="#151b23"/><rect x="208" y="156" width="20" height="20" rx="4" fill="#151b23"/><rect x="234" y="0" width="20" height="20" rx="4" fill="#151b23"/><rect x="234" y="26" width="20" height="20" rx="4" fill="#151b23"/><rect x="234" y="52" width="20" height="20" rx="4" fill="#151b23"/><rect x="234" y="78" width="20" height="20" rx="4" fill="#376f3a"/><rect x="234" y="104" width="20" height="20" rx="4" fill="#376f3a"/><rect x="234" y="130" width="20" height="20" rx="4" fill="#151b23"/><rect x="234" y="156" width="20" height="20" rx="4" fill="#151b23"/><rect x="260" y="0" width="20" height="20" rx="4" fill="#376f3a"/><rect x="260" y="26" width="20" height="20" rx="4" fill="#376f3a"/><rect x="260" y="52" width="20" height="20" rx="4" fill="#151b23"/><rect x="260" y="78" width="20" height="20" rx="4" fill="#376f3a"/><rect x="260" y="104" width="20" height="20" rx="4" fill="#376f3a"/><rect x="260" y="130" width="20" height="20" rx="4" fill="#151b23"/><rect x="260" y="156" width="20" height="20" rx="4" fill="#151b23"/><rect x="286" y="0" width="20" height="20" rx="4" fill="#376f3a"/><rect x="286" y="26" width="20" height="20" rx="4" fill="#376f3a"/><rect x="286" y="52" width="20" height="20" rx="4" fill="#151b23"/><rect x="286" y="78" width="20" height="20" rx="4" fill="#151b23"/><rect x="286" y="104" width="20" height="20" rx="4" fill="#151b23"/><rect x="286" y="130" width="20" height="20" rx="4" fill="#151b23"/><rect x="286" y="156" width="20" height="20" rx="4" fill="#151b23"/><rect x="312" y="0" width="20" height="20" rx="4" fill="#151b23"/><rect x="312" y="26" width="20" height="20" rx="4" fill="#151b23"/><rect x="312" y="52" width="20" height="20" rx="4" fill="#376f3a"/><rect x="312" y="78" width="20" height="20" rx="4" fill="#151b23"/><rect x="312" y="104" width="20" height="20" rx="4" fill="#376f3a"/><rect x="312" y="130" width="20" height="20" rx="4" fill="#376f3a"/><rect x="312" y="156" width="20" height="20" rx="4" fill="#151b23"/><rect x="338" y="0" width="20" height="20" rx="4" fill="#151b23"/><rect x="338" y="26" width="20" height="20" rx="4" fill="#151b23"/><rect x="338" y="52" width="20" height="20" rx="4" fill="#151b23"/><rect x="338" y="78" width="20" height="20" rx="4" fill="#151b23"/><rect x="338" y="104" width="20" height="20" rx="4" fill="#151b23"/><rect x="338" y="130" width="20" height="20" rx="4" fill="#376f3a"/><rect x="338" y="156" width="20" height="20" rx="4" fill="#376f3a"/><rect x="364" y="0" width="20" height="20" rx="4" fill="#151b23"/><rect x="364" y="26" width="20" height="20" rx="4" fill="#376f3a"/><rect x="364" y="52" width="20" height="20" rx="4" fill="#151b23"/><rect x="364" y="78" width="20" height="20" rx="4" fill="#151b23"/><rect x="364" y="104" width="20" height="20" rx="4" fill="#151b23"/><rect x="364" y="130" width="20" height="20" rx="4" fill="#151b23"/><rect x="364" y="156" width="20" height="20" rx="4" fill="#151b23"/><rect x="390" y="0" width="20" height="20" rx="4" fill="#376f3a"/><rect x="390" y="26" width="20" height="20" rx="4" fill="#376f3a"/><rect x="390" y="52" width="20" height="20" rx="4" fill="#151b23"/><rect x="390" y="78" width="20" height="20" rx="4" fill="#151b23"/><rect x="390" y="104" width="20" height="20" rx="4" fill="#151b23"/><rect x="390" y="130" width="20" height="20" rx="4" fill="#376f3a"/><rect x="390" y="156" width="20" height="20" rx="4" fill="#151b23"/><rect x="416" y="0" width="20" height="20" rx="4" fill="#376f3a"/><rect x="416" y="26" width="20" height="20" rx="4" fill="#376f3a"/><rect x="416" y="52" width="20" height="20" rx="4" fill="#376f3a"/><rect x="416" y="78" width="20" height="20" rx="4" fill="#376f3a"/><rect x="416" y="104" width="20" height="20" rx="4" fill="#151b23"/><rect x="416" y="130" width="20" height="20" rx="4" fill="#7bd273"/><rect x="416" y="156" width="20" height="20" rx="4" fill="#7bd273"/><rect x="442" y="0" width="20" height="20" rx="4" fill="#151b23"/><rect x="442" y="26" width="20" height="20" rx="4" fill="#151b23"/><rect x="442" y="52" width="20" height="20" rx="4" fill="#376f3a"/><rect x="442" y="78" width="20" height="20" rx="4" fill="#151b23"/><rect x="442" y="104" width="20" height="20" rx="4" fill="#376f3a"/><rect x="442" y="130" width="20" height="20" rx="4" fill="#376f3a"/><rect x="442" y="156" width="20" height="20" rx="4" fill="#151b23"/><rect x="468" y="0" width="20" height="20" rx="4" fill="#151b23"/><rect x="468" y="26" width="20" height="20" rx="4" fill="#151b23"/><rect x="468" y="52" width="20" height="20" rx="4" fill="#151b23"/><rect x="468" y="78" width="20" height="20" rx="4" fill="#151b23"/><rect x="468" y="104" width="20" height="20" rx="4" fill="#151b23"/><rect x="468" y="130" width="20" height="20" rx="4" fill="#376f3a"/><rect x="468" y="156" width="20" height="20" rx="4" fill="#151b23"/><rect x="494" y="0" width="20" height="20" rx="4" fill="#151b23"/><rect x="494" y="26" width="20" height="20" rx="4" fill="#151b23"/><rect x="494" y="52" width="20" height="20" rx="4" fill="#151b23"/><rect x="494" y="78" width="20" height="20" rx="4" fill="#151b23"/><rect x="494" y="104" width="20" height="20" rx="4" fill="#376f3a"/><rect x="494" y="130" width="20" height="20" rx="4" fill="#151b23"/><rect x="494" y="156" width="20" height="20" rx="4" fill="#376f3a"/><rect x="520" y="0" width="20" height="20" rx="4" fill="#376f3a"/><rect x="520" y="26" width="20" height="20" rx="4" fill="#376f3a"/><rect x="520" y="52" width="20" height="20" rx="4" fill="#376f3a"/><rect x="520" y="78" width="20" height="20" rx="4" fill="#376f3a"/><rect x="520" y="104" width="20" height="20" rx="4" fill="#151b23"/><rect x="520" y="130" width="20" height="20" rx="4" fill="#376f3a"/><rect x="520" y="156" width="20" height="20" rx="4" fill="#376f3a"/><rect x="546" y="0" width="20" height="20" rx="4" fill="#376f3a"/><rect x="546" y="26" width="20" height="20" rx="4" fill="#376f3a"/><rect x="546" y="52" width="20" height="20" rx="4" fill="#151b23"/><rect x="546" y="78" width="20" height="20" rx="4" fill="#151b23"/><rect x="546" y="104" width="20" height="20" rx="4" fill="#151b23"/><rect x="546" y="130" width="20" height="20" rx="4" fill="#376f3a"/><rect x="546" y="156" width="20" height="20" rx="4" fill="#151b23"/><rect x="572" y="0" width="20" height="20" rx="4" fill="#151b23"/><rect x="572" y="26" width="20" height="20" rx="4" fill="#376f3a"/><rect x="572" y="52" width="20" height="20" rx="4" fill="#376f3a"/><rect x="572" y="78" width="20" height="20" rx="4" fill="#376f3a"/><rect x="572" y="104" width="20" height="20" rx="4" fill="#151b23"/><rect x="572" y="130" width="20" height="20" rx="4" fill="#151b23"/><rect x="572" y="156" width="20" height="20" rx="4" fill="#376f3a"/><rect x="598" y="0" width="20" height="20" rx="4" fill="#151b23"/><rect x="598" y="26" width="20" height="20" rx="4" fill="#151b23"/><rect x="598" y="52" width="20" height="20" rx="4" fill="#376f3a"/><rect x="598" y="78" width="20" height="20" rx="4" fill="#151b23"/><rect x="598" y="104" width="20" height="20" rx="4" fill="#151b23"/><rect x="598" y="130" width="20" height="20" rx="4" fill="#151b23"/><rect x="598" y="156" width="20" height="20" rx="4" fill="#151b23"/><rect x="624" y="0" width="20" height="20" rx="4" fill="#151b23"/><rect x="624" y="26" width="20" height="20" rx="4" fill="#151b23"/><rect x="624" y="52" width="20" height="20" rx="4" fill="#151b23"/><rect x="624" y="78" width="20" height="20" rx="4" fill="#151b23"/><rect x="624" y="104" width="20" height="20" rx="4" fill="#151b23"/><rect x="624" y="130" width="20" height="20" rx="4" fill="#151b23"/><rect x="624" y="156" width="20" height="20" rx="4" fill="#151b23"/><rect x="650" y="0" width="20" height="20" rx="4" fill="#151b23"/><rect x="650" y="26" width="20" height="20" rx="4" fill="#151b23"/><rect x="650" y="52" width="20" height="20" rx="4" fill="#151b23"/><rect x="650" y="78" width="20" height="20" rx="4" fill="#151b23"/><rect x="650" y="104" width="20" height="20" rx="4" fill="#151b23"/><rect x="650" y="130" width="20" height="20" rx="4" fill="#151b23"/><rect x="650" y="156" width="20" height="20" rx="4" fill="#151b23"/><rect x="676" y="0" width="20" height="20" rx="4" fill="#151b23"/><rect x="676" y="26" width="20" height="20" rx="4" fill="#151b23"/><rect x="676" y="52" width="20" height="20" rx="4" fill="#151b23"/><rect x="676" y="78" width="20" height="20" rx="4" fill="#151b23"/><rect x="676" y="104" width="20" height="20" rx="4" fill="#151b23"/><rect x="676" y="130" width="20" height="20" rx="4" fill="#151b23"/><rect x="676" y="156" width="20" height="20" rx="4" fill="#151b23"/><rect x="702" y="0" width="20" height="20" rx="4" fill="#151b23"/><rect x="702" y="26" width="20" height="20" rx="4" fill="#151b23"/><rect x="702" y="52" width="20" height="20" rx="4" fill="#151b23"/><rect x="702" y="78" width="20" height="20" rx="4" fill="#151b23"/><rect x="702" y="104" width="20" height="20" rx="4" fill="#151b23"/><rect x="702" y="130" width="20" height="20" rx="4" fill="#151b23"/><rect x="702" y="156" width="20" height="20" rx="4" fill="#151b23"/><rect x="728" y="0" width="20" height="20" rx="4" fill="#151b23"/><rect x="728" y="26" width="20" height="20" rx="4" fill="#151b23"/><rect x="728" y="52" width="20" height="20" rx="4" fill="#151b23"/><rect x="728" y="78" width="20" height="20" rx="4" fill="#151b23"/><rect x="728" y="104" width="20" height="20" rx="4" fill="#151b23"/><rect x="728" y="130" width="20" height="20" rx="4" fill="#151b23"/><rect x="728" y="156" width="20" height="20" rx="4" fill="#151b23"/><rect x="754" y="0" width="20" height="20" rx="4" fill="#151b23"/><rect x="754" y="26" width="20" height="20" rx="4" fill="#151b23"/><rect x="754" y="52" width="20" height="20" rx="4" fill="#151b23"/><rect x="754" y="78" width="20" height="20" rx="4" fill="#151b23"/><rect x="754" y="104" width="20" height="20" rx="4" fill="#151b23"/><rect x="754" y="130" width="20" height="20" rx="4" fill="#151b23"/><rect x="754" y="156" width="20" height="20" rx="4" fill="#151b23"/><rect x="780" y="0" width="20" height="20" rx="4" fill="#151b23"/><rect x="780" y="26" width="20" height="20" rx="4" fill="#151b23"/><rect x="780" y="52" width="20" height="20" rx="4" fill="#151b23"/><rect x="780" y="78" width="20" height="20" rx="4" fill="#151b23"/><rect x="780" y="104" width="20" height="20" rx="4" fill="#151b23"/><rect x="780" y="130" width="20" height="20" rx="4" fill="#151b23"/><rect x="780" y="156" width="20" height="20" rx="4" fill="#151b23"/><rect x="806" y="0" width="20" height="20" rx="4" fill="#151b23"/><rect x="806" y="26" width="20" height="20" rx="4" fill="#151b23"/><rect x="806" y="52" width="20" height="20" rx="4" fill="#151b23"/><rect x="806" y="78" width="20" height="20" rx="4" fill="#151b23"/><rect x="806" y="104" width="20" height="20" rx="4" fill="#151b23"/><rect x="806" y="130" width="20" height="20" rx="4" fill="#151b23"/><rect x="806" y="156" width="20" height="20" rx="4" fill="#151b23"/><rect x="832" y="0" width="20" height="20" rx="4" fill="#151b23"/><rect x="832" y="26" width="20" height="20" rx="4" fill="#151b23"/><rect x="832" y="52" width="20" height="20" rx="4" fill="#151b23"/><rect x="832" y="78" width="20" height="20" rx="4" fill="#151b23"/><rect x="832" y="104" width="20" height="20" rx="4" fill="#151b23"/><rect x="832" y="130" width="20" height="20" rx="4" fill="#151b23"/><rect x="832" y="156" width="20" height="20" rx="4" fill="#151b23"/><rect x="858" y="0" width="20" height="20" rx="4" fill="#151b23"/><rect x="858" y="26" width="20" height="20" rx="4" fill="#151b23"/><rect x="858" y="52" width="20" height="20" rx="4" fill="#151b23"/><rect x="858" y="78" width="20" height="20" rx="4" fill="#151b23"/><rect x="858" y="104" width="20" height="20" rx="4" fill="#151b23"/><rect x="858" y="130" width="20" height="20" rx="4" fill="#151b23"/><rect x="858" y="156" width="20" height="20" rx="4" fill="#151b23"/><rect x="884" y="0" width="20" height="20" rx="4" fill="#151b23"/><rect x="884" y="26" width="20" height="20" rx="4" fill="#151b23"/><rect x="884" y="52" width="20" height="20" rx="4" fill="#151b23"/><rect x="884" y="78" width="20" height="20" rx="4" fill="#151b23"/><rect x="884" y="104" width="20" height="20" rx="4" fill="#151b23"/><rect x="884" y="130" width="20" height="20" rx="4" fill="#151b23"/><rect x="884" y="156" width="20" height="20" rx="4" fill="#151b23"/><rect x="910" y="0" width="20" height="20" rx="4" fill="#151b23"/><rect x="910" y="26" width="20" height="20" rx="4" fill="#151b23"/><rect x="910" y="52" width="20" height="20" rx="4" fill="#151b23"/><rect x="910" y="78" width="20" height="20" rx="4" fill="#151b23"/><rect x="910" y="104" width="20" height="20" rx="4" fill="#151b23"/><rect x="910" y="130" width="20" height="20" rx="4" fill="#151b23"/><rect x="910" y="156" width="20" height="20" rx="4" fill="#151b23"/><rect x="936" y="0" width="20" height="20" rx="4" fill="#151b23"/><rect x="936" y="26" width="20" height="20" rx="4" fill="#151b23"/><rect x="936" y="52" width="20" height="20" rx="4" fill="#151b23"/><rect x="936" y="78" width="20" height="20" rx="4" fill="#151b23"/><rect x="936" y="104" width="20" height="20" rx="4" fill="#151b23"/><rect x="936" y="130" width="20" height="20" rx="4" fill="#151b23"/><rect x="936" y="156" width="20" height="20" rx="4" fill="#151b23"/><rect x="962" y="0" width="20" height="20" rx="4" fill="#151b23"/><rect x="962" y="26" width="20" height="20" rx="4" fill="#151b23"/><rect x="962" y="52" width="20" height="20" rx="4" fill="#151b23"/><rect x="962" y="78" width="20" height="20" rx="4" fill="#151b23"/><rect x="962" y="104" width="20" height="20" rx="4" fill="#151b23"/><rect x="962" y="130" width="20" height="20" rx="4" fill="#151b23"/><rect x="962" y="156" width="20" height="20" rx="4" fill="#151b23"/><rect x="988" y="0" width="20" height="20" rx="4" fill="#151b23"/><rect x="988" y="26" width="20" height="20" rx="4" fill="#151b23"/><rect x="988" y="52" width="20" height="20" rx="4" fill="#151b23"/><rect x="988" y="78" width="20" height="20" rx="4" fill="#151b23"/><rect x="988" y="104" width="20" height="20" rx="4" fill="#151b23"/><rect x="988" y="130" width="20" height="20" rx="4" fill="#151b23"/><rect x="988" y="156" width="20" height="20" rx="4" fill="#151b23"/><rect x="1014" y="0" width="20" height="20" rx="4" fill="#151b23"/><rect x="1014" y="26" width="20" height="20" rx="4" fill="#151b23"/><rect x="1014" y="52" width="20" height="20" rx="4" fill="#151b23"/><rect x="1014" y="78" width="20" height="20" rx="4" fill="#151b23"/><rect x="1014" y="104" width="20" height="20" rx="4" fill="#151b23"/><rect x="1014" y="130" width="20" height="20" rx="4" fill="#151b23"/><rect x="1014" y="156" width="20" height="20" rx="4" fill="#151b23"/><rect x="1040" y="0" width="20" height="20" rx="4" fill="#151b23"/><rect x="1040" y="26" width="20" height="20" rx="4" fill="#151b23"/><rect x="1040" y="52" width="20" height="20" rx="4" fill="#151b23"/><rect x="1040" y="78" width="20" height="20" rx="4" fill="#151b23"/><rect x="1040" y="104" width="20" height="20" rx="4" fill="#151b23"/><rect x="1040" y="130" width="20" height="20" rx="4" fill="#151b23"/><rect x="1040" y="156" width="20" height="20" rx="4" fill="#151b23"/><rect x="1066" y="0" width="20" height="20" rx="4" fill="#151b23"/><rect x="1066" y="26" width="20" height="20" rx="4" fill="#151b23"/><rect x="1066" y="52" width="20" height="20" rx="4" fill="#151b23"/><rect x="1066" y="78" width="20" height="20" rx="4" fill="#151b23"/><rect x="1066" y="104" width="20" height="20" rx="4" fill="#151b23"/><rect x="1066" y="130" width="20" height="20" rx="4" fill="#151b23"/><rect x="1066" y="156" width="20" height="20" rx="4" fill="#151b23"/><rect x="1092" y="0" width="20" height="20" rx="4" fill="#151b23"/><rect x="1092" y="26" width="20" height="20" rx="4" fill="#151b23"/><rect x="1092" y="52" width="20" height="20" rx="4" fill="#151b23"/><rect x="1092" y="78" width="20" height="20" rx="4" fill="#151b23"/><rect x="1092" y="104" width="20" height="20" rx="4" fill="#151b23"/><rect x="1092" y="130" width="20" height="20" rx="4" fill="#151b23"/><rect x="1092" y="156" width="20" height="20" rx="4" fill="#151b23"/><rect x="1118" y="0" width="20" height="20" rx="4" fill="#151b23"/><rect x="1118" y="26" width="20" height="20" rx="4" fill="#151b23"/><rect x="1118" y="52" width="20" height="20" rx="4" fill="#151b23"/><rect x="1118" y="78" width="20" height="20" rx="4" fill="#151b23"/><rect x="1118" y="104" width="20" height="20" rx="4" fill="#151b23"/><rect x="1118" y="130" width="20" height="20" rx="4" fill="#151b23"/><rect x="1118" y="156" width="20" height="20" rx="4" fill="#151b23"/><rect x="1144" y="0" width="20" height="20" rx="4" fill="#151b23"/><rect x="1144" y="26" width="20" height="20" rx="4" fill="#151b23"/><rect x="1144" y="52" width="20" height="20" rx="4" fill="#151b23"/><rect x="1144" y="78" width="20" height="20" rx="4" fill="#151b23"/><rect x="1144" y="104" width="20" height="20" rx="4" fill="#151b23"/><rect x="1144" y="130" width="20" height="20" rx="4" fill="#151b23"/><rect x="1144" y="156" width="20" height="20" rx="4" fill="#151b23"/><rect x="1170" y="0" width="20" height="20" rx="4" fill="#151b23"/><rect x="1170" y="26" width="20" height="20" rx="4" fill="#151b23"/><rect x="1170" y="52" width="20" height="20" rx="4" fill="#151b23"/><rect x="1170" y="78" width="20" height="20" rx="4" fill="#151b23"/><rect x="1170" y="104" width="20" height="20" rx="4" fill="#151b23"/><rect x="1170" y="130" width="20" height="20" rx="4" fill="#151b23"/><rect x="1170" y="156" width="20" height="20" rx="4" fill="#151b23"/><rect x="1196" y="0" width="20" height="20" rx="4" fill="#151b23"/><rect x="1196" y="26" width="20" height="20" rx="4" fill="#151b23"/><rect x="1196" y="52" width="20" height="20" rx="4" fill="#151b23"/><rect x="1196" y="78" width="20" height="20" rx="4" fill="#151b23"/><rect x="1196" y="104" width="20" height="20" rx="4" fill="#151b23"/><rect x="1196" y="130" width="20" height="20" rx="4" fill="#151b23"/><rect x="1196" y="156" width="20" height="20" rx="4" fill="#151b23"/><rect x="1222" y="0" width="20" height="20" rx="4" fill="#151b23"/><rect x="1222" y="26" width="20" height="20" rx="4" fill="#151b23"/><rect x="1222" y="52" width="20" height="20" rx="4" fill="#151b23"/><rect x="1222" y="78" width="20" height="20" rx="4" fill="#151b23"/><rect x="1222" y="104" width="20" height="20" rx="4" fill="#151b23"/><rect x="1222" y="130" width="20" height="20" rx="4" fill="#151b23"/><rect x="1222" y="156" width="20" height="20" rx="4" fill="#151b23"/><rect x="1248" y="0" width="20" height="20" rx="4" fill="#151b23"/><rect x="1248" y="26" width="20" height="20" rx="4" fill="#151b23"/><rect x="1248" y="52" width="20" height="20" rx="4" fill="#151b23"/><rect x="1248" y="78" width="20" height="20" rx="4" fill="#151b23"/><rect x="1248" y="104" width="20" height="20" rx="4" fill="#151b23"/><rect x="1248" y="130" width="20" height="20" rx="4" fill="#151b23"/><rect x="1248" y="156" width="20" height="20" rx="4" fill="#151b23"/><rect x="1274" y="0" width="20" height="20" rx="4" fill="#151b23"/><rect x="1274" y="26" width="20" height="20" rx="4" fill="#151b23"/><rect x="1274" y="52" width="20" height="20" rx="4" fill="#151b23"/><rect x="1274" y="78" width="20" height="20" rx="4" fill="#151b23"/><rect x="1274" y="104" width="20" height="20" rx="4" fill="#151b23"/><rect x="1274" y="130" width="20" height="20" rx="4" fill="#151b23"/><rect x="1274" y="156" width="20" height="20" rx="4" fill="#151b23"/><rect x="1300" y="0" width="20" height="20" rx="4" fill="#151b23"/><rect x="1300" y="26" width="20" height="20" rx="4" fill="#151b23"/><rect x="1300" y="52" width="20" height="20" rx="4" fill="#151b23"/><rect x="1300" y="78" width="20" height="20" rx="4" fill="#151b23"/><rect x="1300" y="104" width="20" height="20" rx="4" fill="#151b23"/><rect x="1300" y="130" width="20" height="20" rx="4" fill="#151b23"/><rect x="1300" y="156" width="20" height="20" rx="4" fill="#151b23"/><rect x="1326" y="0" width="20" height="20" rx="4" fill="#151b23"/><rect x="1326" y="26" width="20" height="20" rx="4" fill="#151b23"/><rect x="1326" y="52" width="20" height="20" rx="4" fill="#151b23"/><rect x="1326" y="78" width="20" height="20" rx="4" fill="#151b23"/><rect x="1326" y="104" width="20" height="20" rx="4" fill="#151b23"/><rect x="1326" y="130" width="20" height="20" rx="4" fill="#151b23"/><rect x="1326" y="156" width="20" height="20" rx="4" fill="#151b23"/><rect x="1352" y="0" width="20" height="20" rx="4" fill="#151b23"/><rect x="1352" y="26" width="20" height="20" rx="4" fill="#151b23"/><rect x="1352" y="52" width="20" height="20" rx="4" fill="#151b23"/><rect x="1352" y="78" width="20" height="20" rx="4" fill="#151b23"/></svg><div class="t" style="left:828px;top:1271.3px;font-size:24px;line-height:24px;color:#9198a1;font-weight:400;letter-spacing:0.79px;">Learn how we count contributions</div><div class="t" style="left:1901px;top:1270.9px;font-size:24px;line-height:24px;color:#9198a1;font-weight:400;letter-spacing:0px;">Less</div><svg style="position:absolute;left:1960px;top:1273px" width="140" height="20"><rect x="0" y="0" width="20" height="20" rx="4" fill="#151b23"/><rect x="28" y="0" width="20" height="20" rx="4" fill="#173a1c"/><rect x="56" y="0" width="20" height="20" rx="4" fill="#376f3a"/><rect x="84" y="0" width="20" height="20" rx="4" fill="#549f52"/><rect x="112" y="0" width="20" height="20" rx="4" fill="#7bd273"/></svg><div class="t" style="left:2100px;top:1270.9px;font-size:24px;line-height:24px;color:#9198a1;font-weight:400;letter-spacing:0px;">More</div>
</body></html>
